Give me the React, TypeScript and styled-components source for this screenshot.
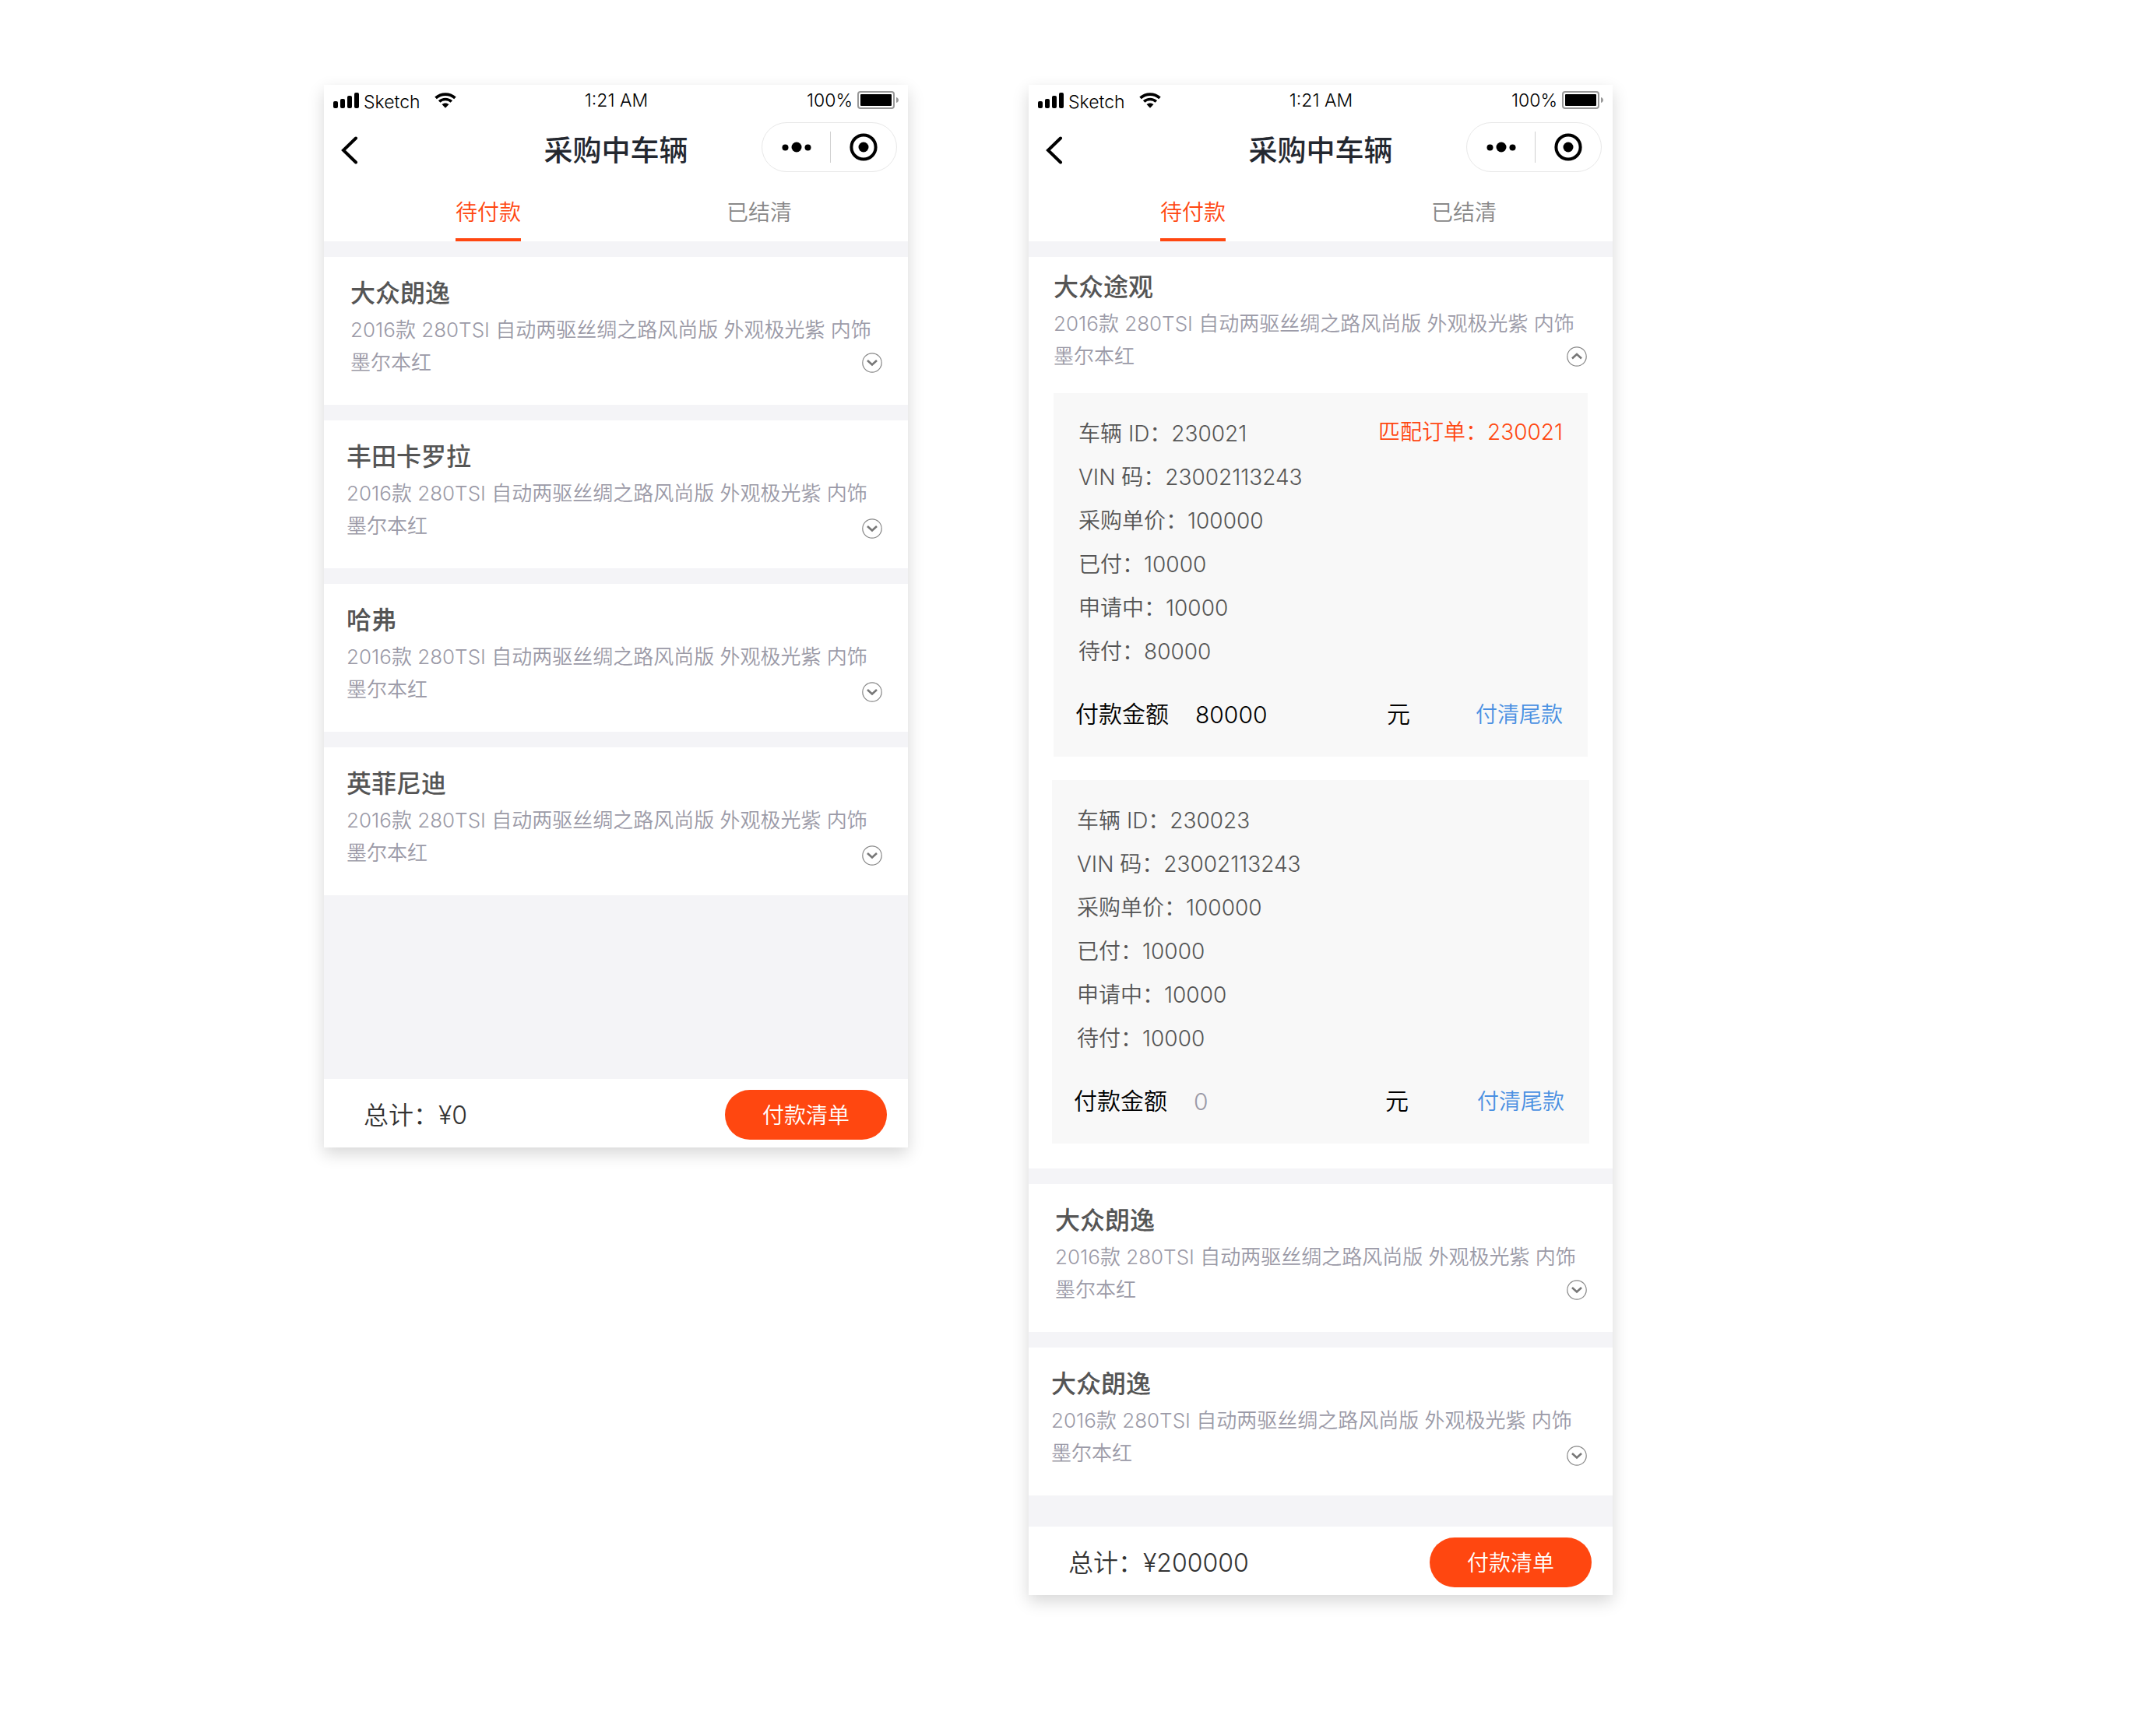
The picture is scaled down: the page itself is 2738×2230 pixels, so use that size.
import React, { useId, useState } from "react";
import styled, { createGlobalStyle } from "styled-components";

const GlobalStyle = createGlobalStyle`
  *, *::before, *::after { box-sizing: border-box; }
  body {
    margin: 0;
    background: #fff;
    color: #000;
    font-family: Inter, "Noto Sans CJK SC", sans-serif;
    font-weight: 350;
  }
  h1, h2, p { margin: 0; padding: 0; }
  button { border: 0; padding: 0; background: none; font: inherit; color: inherit; cursor: pointer; }
`;

const Board = styled.div`
  display: flex;
  align-items: flex-start;
  gap: 155px;
  padding: 109px 416px 120px;
`;

const Phone = styled.main`
  display: flex;
  flex-direction: column;
  flex: 0 0 750px;
  background: #f4f4f7;
  box-shadow: 0 8px 20px rgba(0, 0, 0, 0.16);
`;

const Header = styled.header`
  background: #fff;
  margin-bottom: 20px;
`;

const StatusBar = styled.div`
  display: grid;
  grid-template-columns: 1fr auto 1fr;
  align-items: center;
  height: 40px;
  padding: 0 11px 0 12px;
  font-size: 23px;
  line-height: 28px;
`;

const StatusGroup = styled.div<{ $end?: boolean }>`
  display: flex;
  align-items: center;
  justify-content: ${(p) => (p.$end ? "flex-end" : "flex-start")};
  gap: 6px;
`;

const Carrier = styled.span`
  padding: 3px 12px 0 0;
`;

const NavBar = styled.div`
  display: grid;
  grid-template-columns: 1fr auto 1fr;
  align-items: center;
  height: 88px;
  padding: 0 14px 8px;
`;

const BackButton = styled.button`
  display: flex;
  justify-content: flex-end;
  width: 33px;
  padding-top: 8px;
`;

const NavTitle = styled.h1`
  padding-top: 10px;
  font-size: 37px;
  line-height: 50px;
  font-weight: 500;
  color: #242830;
`;

const Capsule = styled.div`
  display: flex;
  align-items: center;
  justify-self: end;
  width: 174px;
  height: 64px;
  padding-left: 2px;
  border: 1px solid #e8e8e8;
  border-radius: 32px;
`;

const CapsuleButton = styled.button`
  display: flex;
  flex: 1;
  align-items: center;
  justify-content: center;
  height: 40px;
  & + & { border-left: 1px solid #d0d0d0; }
`;

const Tabs = styled.div`
  display: flex;
  height: 73px;
  padding: 0 17px 0 37px;
`;

const Tab = styled.button<{ $active: boolean }>`
  display: flex;
  flex: 1;
  justify-content: center;
  font-size: 28px;
  line-height: 40px;
  color: ${(p) => (p.$active ? "#ff4710" : "#888")};
  span {
    padding: 16px 0 13px;
    border-bottom: 4px solid ${(p) => (p.$active ? "#ff4710" : "transparent")};
  }
`;

const CarList = styled.div<{ $tail: number }>`
  display: flex;
  flex-direction: column;
  gap: 20px;
  padding-bottom: ${(p) => p.$tail}px;
`;

type Tone = "lead" | "rest" | "open";

const INSET: Record<Tone, number> = { lead: 34, rest: 29, open: 32 };

const CarCard = styled.section`
  background: #fff;
`;

const CarHead = styled.div<{ $tone: Tone }>`
  display: flex;
  align-items: flex-end;
  justify-content: space-between;
  padding: ${(p) => (p.$tone === "open" ? "17px 33px 26px" : "25px 33px 33px")};
  padding-left: ${(p) => INSET[p.$tone]}px;
`;

const CarText = styled.div`
  flex: 1;
`;

const CarName = styled.h2`
  font-size: 32px;
  line-height: 44px;
  font-weight: 500;
  color: #555;
`;

const CarSpec = styled.p`
  padding-top: 4px;
  font-size: 26px;
  line-height: 42px;
  color: #9b9aa7;
`;

const Toggle = styled.button<{ $tone: Tone }>`
  display: flex;
  margin-left: -24px;
  padding-bottom: ${(p) => (p.$tone === "rest" ? 5 : 8)}px;
`;

const Details = styled.div`
  display: flex;
  flex-direction: column;
  gap: 30px;
  padding: 0 30px 32px;
`;

const Panel = styled.div<{ $inset: boolean }>`
  margin: 0 ${(p) => (p.$inset ? 2 : 0)}px;
  padding: 24px 32px 32px;
  background: #f8f8f8;
`;

const PanelTop = styled.div`
  display: flex;
  align-items: flex-start;
  justify-content: space-between;
  font-size: 28px;
  line-height: 56px;
  color: #555;
`;

const MatchedOrder = styled.p`
  line-height: 52px;
  color: #ff4710;
`;

const Fact = styled.p`
  font-size: 28px;
  line-height: 56px;
  color: #555;
`;

const PayRow = styled.form`
  display: flex;
  align-items: center;
  height: 44px;
  margin: 31px 0 0 -4px;
  font-size: 30px;
  line-height: 42px;
`;

const PayText = styled.span`
  padding-bottom: 2px;
`;

const Amount = styled.input`
  width: 246px;
  margin-left: 34px;
  padding: 0;
  border: 0;
  outline: 0;
  background: none;
  font: inherit;
  color: #000;
  &::placeholder { color: #9b9aa7; opacity: 1; }
`;

const SettleButton = styled.button`
  margin-left: auto;
  font-size: 28px;
  color: #4a90e2;
`;

const Footer = styled.footer`
  display: flex;
  align-items: center;
  justify-content: space-between;
  height: 88px;
  padding: 4px 27px 0 51px;
  background: #fff;
  color: #333;
`;

const Total = styled.span`
  padding-bottom: 4px;
  font-size: 32px;
`;

const PrimaryButton = styled.button`
  width: 208px;
  height: 64px;
  padding-bottom: 2px;
  border-radius: 32px;
  background: #ff4710;
  font-size: 28px;
  color: #fff;
`;

const SignalIcon = () => (
  <svg width="33" height="20" viewBox="0 0 33 20" aria-hidden="true">
    <rect x="0" y="11" width="6" height="9" rx="2" />
    <rect x="9" y="8" width="6" height="12" rx="2" />
    <rect x="18" y="4" width="6" height="16" rx="2" />
    <rect x="27" y="0" width="6" height="20" rx="2" />
  </svg>
);

const WifiIcon = () => (
  <svg width="28" height="20" viewBox="0 0 28 20" aria-hidden="true">
    <path d="M0.3 5.6C8 -1.7 20 -1.7 27.7 5.6L25.2 8.2C19 2.5 9 2.5 2.8 8.2Z" />
    <path d="M4.9 10.2C10 5.5 18 5.5 23.1 10.2L20.5 12.8C17 9.5 11 9.5 7.5 12.8Z" />
    <path d="M9.5 15.1C12 12.9 16 12.9 18.5 15.1L14 19.7Z" />
  </svg>
);

const BatteryIcon = () => (
  <svg width="54" height="24" viewBox="0 0 54 24" aria-hidden="true">
    <rect x="1" y="1" width="46" height="21" rx="3" fill="none" stroke="#999" strokeWidth="2" />
    <rect x="4" y="4" width="40" height="15" rx="1" />
    <path d="M50 8C52 8.5 53 10 53 11.5S52 14.5 50 15Z" fill="#999" />
  </svg>
);

const BackIcon = () => (
  <svg width="28" height="36" viewBox="0 0 28 36" aria-hidden="true">
    <path d="M22 2.5L6 18L22 33.5" fill="none" stroke="#000" strokeWidth="4" strokeLinecap="round" />
  </svg>
);

const MoreIcon = () => (
  <svg width="38" height="14" viewBox="0 0 38 14" aria-hidden="true">
    <circle cx="4.5" cy="7.5" r="4" />
    <circle cx="19" cy="7" r="6.5" />
    <circle cx="33.5" cy="7.5" r="4" />
  </svg>
);

const CloseIcon = () => (
  <svg width="36" height="36" viewBox="0 0 36 36" aria-hidden="true">
    <circle cx="18" cy="18" r="15.6" fill="none" stroke="#000" strokeWidth="4" />
    <circle cx="18" cy="18" r="6.5" />
  </svg>
);

const ArrowIcon = ({ up }: { up?: boolean }) => (
  <svg width="26" height="26" viewBox="0 0 26 26" fill="none" aria-hidden="true">
    <circle cx="13" cy="13" r="12.2" stroke="#888" strokeWidth="1.2" />
    <path d={up ? "M7 15.5L13 10L19 15.5" : "M7 10L13 15.5L19 10"} stroke="#777" strokeWidth="2.6" />
  </svg>
);

type Vehicle = {
  id: string;
  price: string;
  paid: string;
  applying: string;
  due: string;
  amount: string;
  order?: string;
};

type Car = { name: string; tone: Tone; vehicles?: Vehicle[] };

const SPEC = "2016款 280TSI 自动两驱丝绸之路风尚版 外观极光紫 内饰墨尔本红";

const CLOSED_CARS: Car[] = [
  { name: "大众朗逸", tone: "lead" },
  { name: "丰田卡罗拉", tone: "rest" },
  { name: "哈弗", tone: "rest" },
  { name: "英菲尼迪", tone: "rest" },
];

const OPEN_CARS: Car[] = [
  {
    name: "大众途观",
    tone: "open",
    vehicles: [
      { id: "230021", price: "100000", paid: "10000", applying: "10000", due: "80000", amount: "80000", order: "230021" },
      { id: "230023", price: "100000", paid: "10000", applying: "10000", due: "10000", amount: "" },
    ],
  },
  { name: "大众朗逸", tone: "lead" },
  { name: "大众朗逸", tone: "rest" },
];

const VehiclePanel = ({ vehicle }: { vehicle: Vehicle }) => {
  const inputId = useId();
  const [amount, setAmount] = useState(vehicle.amount);
  return (
    <Panel $inset={Boolean(vehicle.order)}>
      <PanelTop>
        <p>车辆 ID：{vehicle.id}</p>
        {vehicle.order && <MatchedOrder>匹配订单：{vehicle.order}</MatchedOrder>}
      </PanelTop>
      <Fact>VIN 码：23002113243</Fact>
      <Fact>采购单价：{vehicle.price}</Fact>
      <Fact>已付：{vehicle.paid}</Fact>
      <Fact>申请中：{vehicle.applying}</Fact>
      <Fact>待付：{vehicle.due}</Fact>
      <PayRow>
        <PayText as="label" htmlFor={inputId}>付款金额</PayText>
        <Amount id={inputId} value={amount} placeholder="0" onChange={(e) => setAmount(e.target.value)} />
        <PayText>元</PayText>
        <SettleButton type="button" onClick={() => setAmount(vehicle.due)}>付清尾款</SettleButton>
      </PayRow>
    </Panel>
  );
};

const Screen = ({ cars, total, tail }: { cars: Car[]; total: string; tail: number }) => {
  const [tab, setTab] = useState("待付款");
  return (
    <Phone>
      <Header>
        <StatusBar>
          <StatusGroup>
            <SignalIcon />
            <Carrier>Sketch</Carrier>
            <WifiIcon />
          </StatusGroup>
          <span>1:21 AM</span>
          <StatusGroup $end>
            <span>100%</span>
            <BatteryIcon />
          </StatusGroup>
        </StatusBar>
        <NavBar>
          <BackButton type="button" aria-label="返回"><BackIcon /></BackButton>
          <NavTitle>采购中车辆</NavTitle>
          <Capsule>
            <CapsuleButton type="button" aria-label="更多"><MoreIcon /></CapsuleButton>
            <CapsuleButton type="button" aria-label="关闭"><CloseIcon /></CapsuleButton>
          </Capsule>
        </NavBar>
        <Tabs role="tablist">
          {["待付款", "已结清"].map((name) => (
            <Tab key={name} type="button" role="tab" aria-selected={tab === name} $active={tab === name} onClick={() => setTab(name)}>
              <span>{name}</span>
            </Tab>
          ))}
        </Tabs>
      </Header>
      <CarList $tail={tail}>
        {cars.map((car, i) => (
          <CarCard key={i}>
            <CarHead $tone={car.tone}>
              <CarText>
                <CarName>{car.name}</CarName>
                <CarSpec>{SPEC}</CarSpec>
              </CarText>
              <Toggle type="button" $tone={car.tone} aria-label={car.vehicles ? "收起" : "展开"}>
                <ArrowIcon up={Boolean(car.vehicles)} />
              </Toggle>
            </CarHead>
            {car.vehicles && (
              <Details>
                {car.vehicles.map((v) => <VehiclePanel key={v.id} vehicle={v} />)}
              </Details>
            )}
          </CarCard>
        ))}
      </CarList>
      <Footer>
        <Total>总计：¥{total}</Total>
        <PrimaryButton type="button">付款清单</PrimaryButton>
      </Footer>
    </Phone>
  );
};

export default function App() {
  return (
    <>
      <GlobalStyle />
      <Board>
        <Screen cars={CLOSED_CARS} total="0" tail={236} />
        <Screen cars={OPEN_CARS} total="200000" tail={40} />
      </Board>
    </>
  );
}
